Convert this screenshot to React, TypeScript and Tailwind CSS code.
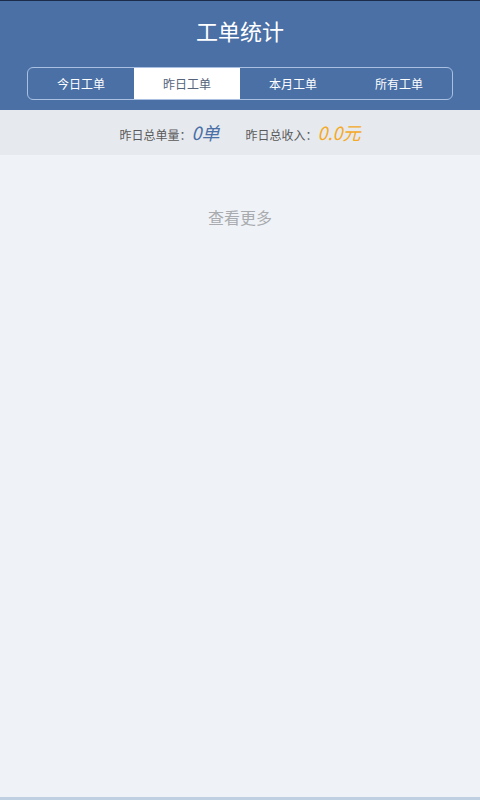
import { useState } from "react";

const tabs = ["今日工单", "昨日工单", "本月工单", "所有工单"];

const font = { fontFamily: '"Noto Sans CJK SC", "Liberation Sans", sans-serif' };

export default function App() {
  const [active, setActive] = useState(1);

  return (
    <div className="flex h-[800px] w-[480px] flex-col bg-[#eff3f8]" style={font}>
      {/* Header */}
      <header className="border-t border-[#1b2b4a] bg-[#4a70a6] pb-[10px]">
        <h1 className="pt-[14px] text-center text-[22px] leading-[30px] text-white">工单统计</h1>
        <div className="mx-[27px] mt-[22px] flex h-[33px] overflow-hidden rounded-[6px] border border-[#a9c0e2]">
          {tabs.map((tab, i) => (
            <button
              key={tab}
              onClick={() => setActive(i)}
              className={
                i === active
                  ? "flex-1 bg-white text-[12px] text-[#56637a]"
                  : "flex-1 text-[12px] text-white"
              }
            >
              {tab}
            </button>
          ))}
        </div>
      </header>

      {/* Summary */}
      <div className="flex h-[45px] items-center justify-center gap-[26px] bg-[#e6e9ee]">
        <div className="flex items-baseline">
          <span className="text-[12px] text-[#5a5a5a]">昨日总单量：</span>
          <span className="text-[18px] italic text-[#4a70a6]">0单</span>
        </div>
        <div className="flex items-baseline">
          <span className="text-[12px] text-[#5a5a5a]">昨日总收入：</span>
          <span className="text-[18px] italic text-[#f5a927]">0.0元</span>
        </div>
      </div>

      {/* List */}
      <div className="flex flex-1 flex-col">
        <button className="mt-[50px] text-center text-[16px] text-[#a9abae]">查看更多</button>
      </div>

      <div className="h-[3px] bg-[#c0d0e3]" />
    </div>
  );
}
